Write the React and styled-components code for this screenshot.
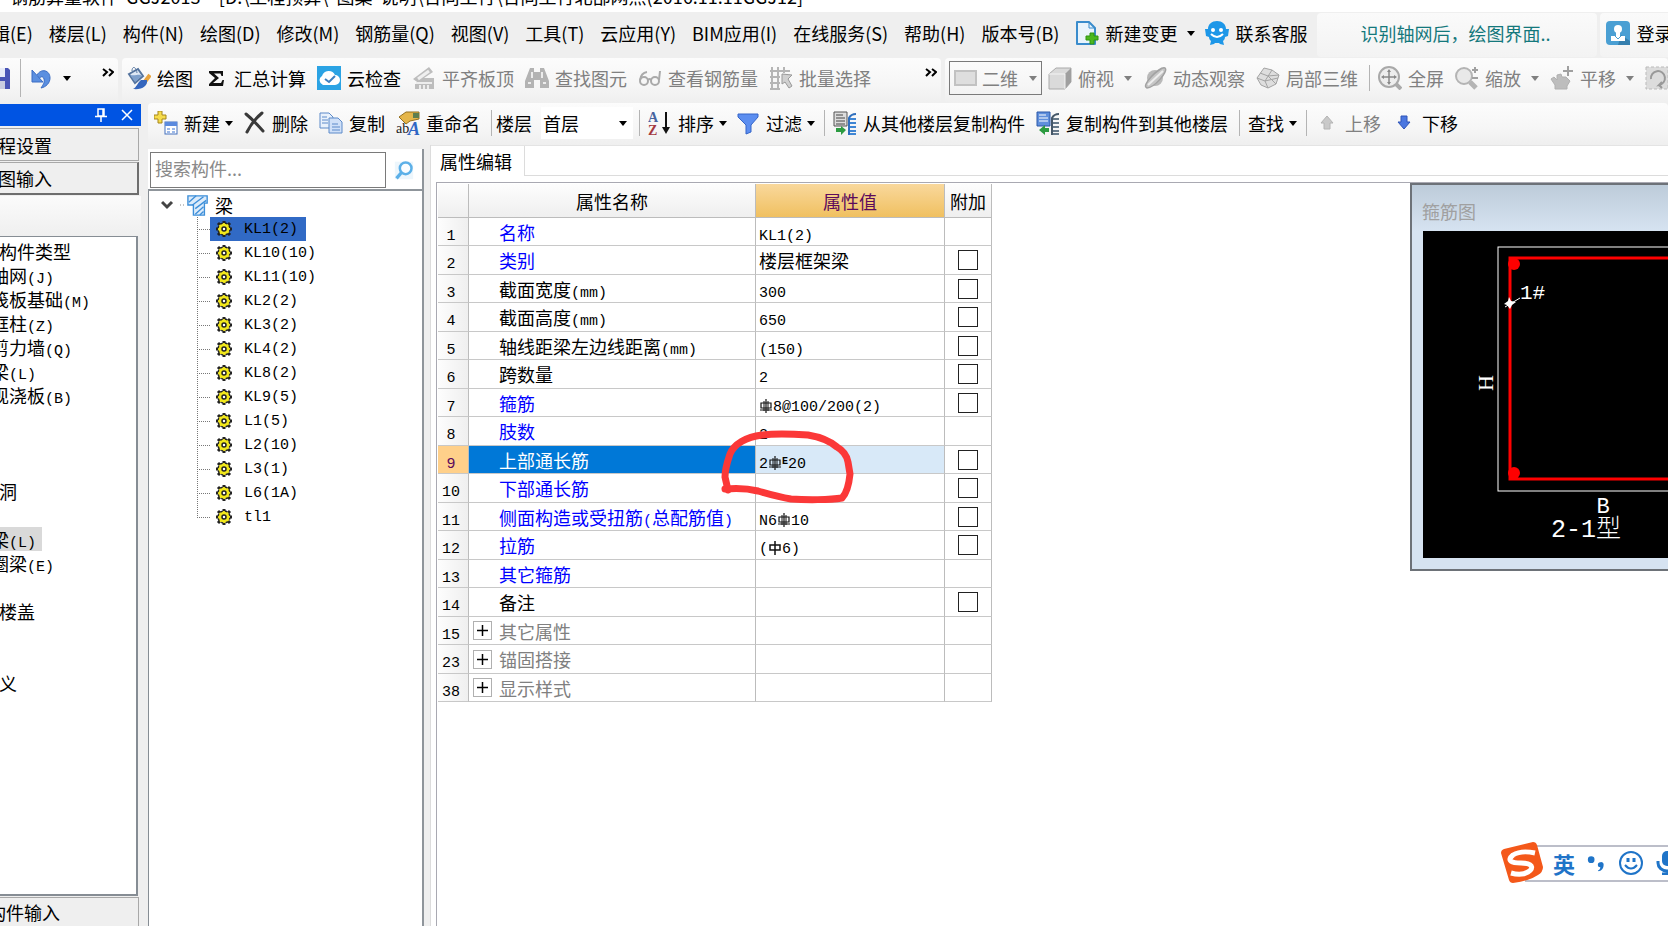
import React from 'react'
import styled, { createGlobalStyle } from 'styled-components';

const uiFont = '"Noto Sans CJK SC", "Noto Sans", sans-serif';

const GlobalStyle = createGlobalStyle`
    * { box-sizing: border-box; }
    body {
        margin: 0;
        overflow: hidden;
        background-color: #efefef;
        font-family: ${uiFont};
        font-size: 18px;
        color: #000;
    }
    button, input, select {
        font: inherit;
        color: inherit;
    }
    ul { list-style: none; margin: 0; padding: 0; }
`;

/* window frame */

const Window = styled.div`
    margin-left: -16px;
    height: 100vh;
    display: flex;
    flex-direction: column;
    overflow: hidden;
`;
const TitleBar = styled.header`
    height: 12px;
    flex: none;
    display: flex;
    align-items: flex-end;
    overflow: hidden;
    background-color: #fff;
    padding: 0 0 6px 26px;
    line-height: 20px;
    white-space: pre;
`;
const MenuBar = styled.nav`
    height: 46px;
    flex: none;
    display: flex;
    align-items: center;
    padding-left: 8px;
    line-height: 24px;
    white-space: nowrap;
`;
const MenuItem = styled.button`
    flex: none;
    margin: 0 16px 0 0;
    padding: 0 0 4px;
    border: 0;
    background: none;
`;
const MenuTool = styled.button`
    flex: none;
    display: flex;
    align-items: center;
    gap: 6px;
    margin-right: 10px;
    padding: 0 0 4px;
    border: 0;
    background: none;
    white-space: nowrap;
`;
const Notice = styled.a`
    flex: none;
    width: 280px;
    height: 44px;
    margin-right: 3px;
    padding-left: 43px;
    line-height: 40px;
    border-radius: 4px;
    background: linear-gradient(#fafafa, #f3f3f3);
    color: #14787c;
    text-decoration: none;
`;
const LoginBox = styled.div`
    flex: 1;
    height: 44px;
    display: flex;
    align-items: center;
    padding-left: 6px;
    border-radius: 4px;
    background: linear-gradient(#fafafa, #f3f3f3);
`;

/* toolbars */

const ToolRow = styled.div`
    flex: none;
    display: flex;
    gap: 4px;
    height: 45px;
`;
const ToolGroup = styled.div`
    flex: ${props => (props.$grow ? '1' : 'none')};
    width: ${props => (props.$width ? props.$width + 'px' : 'auto')};
    height: ${props => (props.$short ? '42px' : '45px')};
    display: flex;
    align-items: center;
    padding-left: ${props => props.$pad || 5}px;
    padding-bottom: ${props => (props.$short ? '2px' : '5px')};
    overflow: hidden;
    white-space: nowrap;
    border-radius: 4px;
    background: linear-gradient(#fcfcfc, #f6f6f6 60%, #efefef);
`;
const ToolButton = styled.button`
    flex: none;
    display: flex;
    align-items: center;
    gap: 6px;
    margin: 0;
    margin-right: ${props => (props.$tight ? '9px' : '11px')};
    padding: 0;
    border: 0;
    background: none;
    line-height: 28px;
    color: ${props => (props.disabled ? '#808080' : '#000')};
`;
const Caret = styled.span`
    width: 0;
    height: 0;
    margin-left: ${props => (props.$wide ? '4px' : '-1px')};
    border: 4px solid transparent;
    border-top: 5px solid currentColor;
    border-bottom: 0;
`;
const Separator = styled.span`
    flex: none;
    width: 1px;
    height: ${props => (props.$tall ? '38px' : '26px')};
    margin-right: ${props => (props.$tight ? '4px' : '8px')};
    background-color: #b4b4b4;
`;
const More = styled.button`
    margin: 0 4px 12px auto;
    padding: 0;
    border: 0;
    background: none;
    display: flex;
`;
const ViewCombo = styled.label`
    flex: none;
    display: flex;
    align-items: center;
    width: 93px;
    height: 34px;
    margin-right: 6px;
    padding: 0 4px;
    gap: 4px;
    border: 1px solid #7a7a7a;
    color: #808080;
`;
const ViewSelect = styled.select`
    appearance: none;
    flex: 1;
    min-width: 0;
    padding: 0;
    border: 0;
    background: none;
    opacity: 1;
    color: #808080;
`;
const FloorLabel = styled.label`
    flex: none;
    display: flex;
    align-items: center;
    gap: 9px;
    margin-right: 6px;
`;
const FloorField = styled.span`
    display: flex;
    align-items: center;
    width: 92px;
    height: 32px;
    padding: 0 6px 0 2px;
    background-color: #fff;
`;
const FloorSelect = styled.select`
    appearance: none;
    flex: 1;
    min-width: 0;
    padding: 0;
    border: 0;
    background: none;
`;

/* body */

const Body = styled.div`
    flex: 1;
    min-height: 0;
    display: flex;
`;
const Dock = styled.aside`
    flex: none;
    width: 157px;
    margin-right: 7px;
    padding-top: 1px;
    display: flex;
    flex-direction: column;
    white-space: nowrap;
`;
const DockTitle = styled.div`
    height: 22px;
    display: flex;
    align-items: center;
    justify-content: flex-end;
    gap: 14px;
    padding-right: 8px;
    margin-bottom: 2px;
    background-color: #0054e3;
`;
const DockIcon = styled.button`
    display: flex;
    padding: 0;
    border: 0;
    background: none;
`;
const DockButton = styled.button`
    height: ${props => (props.$last ? '29px' : '33px')};
    margin: 0 2px ${props => (props.$last ? '0' : '1px')} 0;
    padding: 0 0 0 ${props => props.$indent}px;
    text-align: left;
    line-height: 28px;
    background-color: #efefef;
    border: 1px solid #a8a8a8;
    border-width: ${props => (props.$raised ? '1px 2px 2px 0' : '1px 1px 1px 0')};
    border-bottom-color: ${props => (props.$raised ? '#6e6e6e' : '#a8a8a8')};
    border-right-color: ${props => (props.$raised ? '#6e6e6e' : '#a8a8a8')};
    ${props => props.$last && 'border-bottom: 0;'}
`;
const DockStrip = styled.div`
    height: 40px;
    background: linear-gradient(#fbfbfb, #efefef);
`;
const TypeList = styled.ul`
    flex: 1;
    min-height: 0;
    margin: 0 3px 1px 0;
    padding-top: 2px !important;
    border: 1px solid #868d94;
    border-width: 1px 2px 2px 0;
    background-color: #fff;
`;
const TypeItem = styled.li`
    height: 24px;
    line-height: 24px;
    padding-left: ${props => (props.$group ? '15px' : '7px')};
`;
const TypeName = styled.span`
    display: inline-block;
    height: 24px;
    padding-right: 6px;
    background-color: ${props => (props.$selected ? '#d9d9d9' : 'transparent')};
`;

const Main = styled.main`
    flex: 1;
    min-width: 0;
    display: flex;
    flex-direction: column;
`;
const Panels = styled.div`
    flex: 1;
    min-height: 0;
    display: flex;
    gap: 6px;
`;
const TreePanel = styled.section`
    flex: none;
    width: 276px;
    margin-top: 4px;
    display: flex;
    flex-direction: column;
    border-right: 2px solid #8f959b;
`;
const SearchRow = styled.form`
    display: flex;
    align-items: center;
    height: 42px;
    padding: 2px 0 0 2px;
    background-color: #fff;
    border-bottom: 2px solid #8f959b;
`;
const SearchInput = styled.input`
    width: 236px;
    height: 36px;
    padding: 0 4px 4px;
    border: 1px solid #7a7a7a;
    outline: 0;
    background-color: #fff;
    &::placeholder { color: #8a8a8a; }
`;
const SearchButton = styled.button`
    flex: 1;
    display: flex;
    justify-content: center;
    padding: 0;
    border: 0;
    background: none;
`;
const Tree = styled.div`
    flex: 1;
    padding: 2px 0 0 12px;
    border-left: 1px solid #868d94;
    background-color: #fff;
`;
const TreeRoot = styled.div`
    display: flex;
    align-items: center;
    height: 24px;
`;
const RootName = styled.span`
    margin-left: 6px;
`;
const TreeItems = styled.ul`
    margin-left: 36px !important;
`;
const TreeItem = styled.li`
    display: flex;
    align-items: center;
    height: 24px;
    background-image:
        linear-gradient(to right, #777 1px, transparent 1px),
        linear-gradient(to bottom, #777 1px, transparent 1px);
    background-repeat: repeat-x, repeat-y;
    background-position: 0 12px, 0 0;
    background-size: 2px 1px, 1px 2px;
    &:last-child {
        background-image:
            linear-gradient(to right, #777 1px, transparent 1px),
            repeating-linear-gradient(to bottom, #777 0 1px, transparent 1px 2px);
        background-repeat: repeat-x, no-repeat;
        background-size: 2px 1px, 1px 13px;
    }
`;
const TreeLeaf = styled.button`
    display: flex;
    align-items: center;
    gap: 12px;
    flex: none;
    height: 24px;
    margin: 0 0 0 13px;
    padding: 0 8px 0 6px;
    border: 0;
    background-color: ${props => (props.$selected ? '#316ac5' : '#fff')};
`;
const LeafTail = styled.span`
    align-self: stretch;
    flex: 1;
    background-color: #fff;
`;

const Editor = styled.section`
    flex: 1;
    min-width: 0;
    display: flex;
    flex-direction: column;
    border-left: 1px solid #dcdcdc;
    background-color: #fff;
`;
const Tabs = styled.div`
    flex: none;
    display: flex;
    height: 31px;
    border-top: 1px solid #e4e4e4;
`;
const Tab = styled.button`
    padding: 0 12px 0 9px;
    border: 0;
    border-right: 1px solid #dcdcdc;
    background: none;
    line-height: 28px;
`;
const TabRest = styled.div`
    flex: 1;
    border-bottom: 1px solid #dcdcdc;
`;
const Sheet = styled.div`
    flex: 1;
    display: flex;
    align-items: flex-start;
    justify-content: space-between;
    margin: 6px 0 0 5px;
    border-top: 1px solid #a9a9b2;
    border-left: 1px solid #a9a9b2;
`;
const GridWrap = styled.div`
    position: relative;
    padding: 1px 0 0 1px;
`;
const Grid = styled.table`
    border-collapse: separate;
    border-spacing: 0;
    table-layout: fixed;
    width: 554px;
    line-height: 24px;
`;
const HeadCell = styled.th`
    width: ${props => props.$width}px;
    height: 34px;
    padding: 0;
    font-weight: 400;
    white-space: nowrap;
    border-right: 1px solid #bcbcbc;
    border-bottom: 1px solid #bcbcbc;
    color: ${props => (props.$active ? '#5c0a5c' : '#000')};
    background: ${props => (props.$active ? 'linear-gradient(#f9d89c, #f0c060)' : 'linear-gradient(#fdfdfd, #efefef)')};
`;
const Row = styled.tr`
    height: 28px;
    &:nth-child(even) { height: 29px; }
`;
const NumCell = styled.th`
    padding: 0 4px 0 0;
    font-weight: 400;
    color: ${props => (props.$selected ? '#5c0a5c' : '#000')};
    background: ${props => (props.$selected ? '#ffd08a' : 'linear-gradient(to right, #fdfdfd, #efefef)')};
    border-right: 1px solid #bcbcbc;
    border-bottom: 1px solid #c8c8c8;
`;
const nameColors = { key: '#0000ff', plain: '#000', group: '#808080' };
const NameCell = styled.td`
    padding: 0;
    color: ${props => (props.$selected ? '#fff' : nameColors[props.$kind])};
    background-color: ${props => (props.$selected ? '#0078d7' : '#fff')};
    border-right: 1px solid #bcbcbc;
    border-bottom: 1px solid #c8c8c8;
`;
const NameBox = styled.div`
    display: flex;
    align-items: center;
    padding-left: ${props => (props.$group ? '4px' : '30px')};
    gap: 7px;
    height: 24px;
`;
const Expand = styled.button`
    width: 19px;
    height: 19px;
    display: flex;
    align-items: center;
    justify-content: center;
    padding: 0;
    border: 1px solid #b0b0b0;
    background-color: #fff;
`;
const ValueCell = styled.td`
    padding: 0 0 0 3px;
    background-color: ${props => (props.$selected ? '#d8e9f8' : '#fff')};
    border-right: 1px solid #bcbcbc;
    border-bottom: 1px solid #c8c8c8;
`;
const ValueBox = styled.div`
    height: 24px;
    white-space: pre;
    svg { vertical-align: -3px; }
`;
const CheckCell = styled.td`
    padding: 0;
    border-right: 1px solid #bcbcbc;
    border-bottom: 1px solid #c8c8c8;
`;
const Check = styled.input`
    appearance: none;
    display: block;
    width: 20px;
    height: 20px;
    margin: 0 auto;
    border: 1px solid #222;
    background-color: #fff;
`;
const Latin = styled.span`
    font-family: "Liberation Mono", monospace;
    font-size: 15px;
    line-height: 15px;
`;
const Sup = styled.sup`
    font-family: "Liberation Mono", monospace;
    font-size: 10px;
    font-weight: 700;
    line-height: 10px;
    vertical-align: 4px;
`;
const Mark = styled.svg`
    position: absolute;
    left: 279px;
    top: 241px;
    pointer-events: none;
`;

const Dialog = styled.section`
    flex: none;
    width: 258px;
    border: 2px solid #6d7278;
    border-width: 2px 0 2px 2px;
    padding: 0 0 11px 11px;
    background-color: #d6e3f1;
`;
const DialogTitle = styled.h2`
    margin: 0 0 0 -11px;
    height: 46px;
    padding: 10px 0 0 10px;
    font-size: 18px;
    font-weight: 400;
    line-height: 32px;
    color: #a0a0a0;
    background: linear-gradient(#bdccda, #d6e3f1);
`;
const Canvas = styled.svg`
    display: block;
    width: 100%;
    height: 327px;
    background-color: #000;
`;

const ImeBar = styled.div`
    position: fixed;
    right: 0;
    bottom: 44px;
    width: 167px;
    height: 38px;
    display: flex;
    align-items: center;
    gap: 10px;
`;
const SogouLogo = styled.svg`
    position: relative;
    z-index: 1;
    flex: none;
`;
const ImeKeys = styled.div`
    flex: 1;
    display: flex;
    align-items: center;
    gap: 12px;
    height: 37px;
    margin-left: -28px;
    padding-left: 28px;
    border-top: 2px solid #bcbec9;
    border-bottom: 2px solid #bcbec9;
    background-color: #fff;
    overflow: hidden;
`;
const ImeKey = styled.button`
    flex: none;
    display: flex;
    padding: 0;
    border: 0;
    background: none;
    color: #1f74c8;
    font-size: 22px;
    font-weight: 700;
    line-height: 30px;
`;

/* icons, all on a 24px box */

const shapes = {
    save: <><path d="M1 2h20l2 2v19H1z" fill="#4a55b5" /><path d="M6 2h12v9H6z" fill="#e8ebf8" /><path d="M6 15h12v8H6z" fill="#c9cce0" /><path d="M8 16h4v6H8z" fill="#3a3f90" /></>,
    undo: <><path d="M8 9C12 2 21 4 21 12c0 5-4 9-9 10 2-3 4-6 3-9-1-3-3-3-5 0" fill="#5b8fe0" stroke="#3a6cc4" /><path d="M3 4v12h11z" fill="#5b8fe0" stroke="#3a6cc4" /></>,
    paint: <><path d="M2 8l9-5 5 7-8 7z" fill="#dfe8f5" stroke="#55749e" strokeWidth="2" /><path d="M5 5c0-5 4-5 5 2" fill="none" stroke="#55749e" /><path d="M3 9c7 1 9-2 12 1l-7 6z" fill="#7e9fcb" /><path d="M23 9l-6 8" stroke="#e8a33c" strokeWidth="4" /><path d="M20 14c1 6-5 10-14 9 4-2 4-6 8-9z" fill="#3566bd" /></>,
    sigma: <path d="M5 5h14v5h-1.500l-1-2.500H10l5 4.500-6 5h8l1.500-3H20l-1 6H5v-2l6-6-6-5z" fill="#111" />,
    cloud: <><rect width="24" height="24" fill="#2ba3e4" /><path d="M6 19a5 5 0 0 1-1-9 7 7 0 0 1 13-1 5 5 0 0 1 0 10z" fill="#fff" /><path d="M8 13l4 3 6-6" fill="none" stroke="#3b7fc0" strokeWidth="2" /></>,
    slab: <><path d="M1 13L17 1l4 5-9 6h10v11H3v-5h5z" fill="#bdbdbd" /><path d="M6 13L17 5" stroke="#efefef" strokeWidth="3" /><path d="M4 17h16M8 19v4m4-4v4m4-4v4" stroke="#ededed" strokeWidth="2" /></>,
    binoculars: <><path d="M5 2h4v4h6V2h4l5 13v7h-9v-8H9v8H0v-7z" fill="#b3b3b3" /><path d="M3 17h3m12 0h3M7 6v6m10-6v6" stroke="#ececec" strokeWidth="2" /></>,
    glasses: <g fill="none" stroke="#aaa" strokeWidth="2"><circle cx="6" cy="15" r="4" /><circle cx="17" cy="15" r="4" /><path d="M10 14q2-2 3 0M2 14Q3 7 9 6m12 8l1-9" /></g>,
    grid: <><path d="M1 5h20M1 11h10M1 17h10M1 23h10M3 1v22M9 1v22M15 1v6" stroke="#b5b5b5" strokeWidth="2" /><path d="M13 8l10 1-4 4 4 7-3 2-4-6-3 2z" fill="#d0d0d0" stroke="#999" /></>,
    cube: <><path d="M1 8l7-6h15v14l-6 7H1z" fill="#dadada" stroke="#aaa" /><path d="M17 8l6-6v14l-6 7z" fill="#9f9f9f" /><path d="M1 8h16v15" fill="none" stroke="#f4f4f4" /></>,
    orbit: <><circle cx="12" cy="12" r="8" fill="#b9b9b9" /><path d="M4 22c-7-2 13-22 18-20 4 3-11 20-18 20z" fill="#c6c6c6" stroke="#a2a2a2" strokeWidth="1.500" /><path d="M5 19L20 5" stroke="#ededed" strokeWidth="2" /></>,
    cubes: <g fill="#dedede" stroke="#a3a3a3"><path d="M8 2l8 2 7 5-3 9-8 4-7-3-4-7z" /><path d="M1 12l8 3 7-11M9 15l3 7M4 7l8 3 8 8M12 10l11-1M9 15l13-3" fill="none" /></g>,
    fit: <><circle cx="11" cy="11" r="10" fill="#ededed" stroke="#a9a9a9" strokeWidth="2" /><path d="M11 5v12M5 11h12" stroke="#888" strokeWidth="1.500" /><path d="M9 6l2-3 2 3zM9 16l2 3 2-3zM6 9l-3 2 3 2zM16 9l3 2-3 2z" fill="#888" /><path d="M18 18l5 5" stroke="#aaa" strokeWidth="4" /></>,
    zoomer: <><circle cx="9" cy="10" r="8" fill="#e9e9e9" stroke="#b4b4b4" strokeWidth="2" /><path d="M15 16l6 6" stroke="#b4b4b4" strokeWidth="5" /><path d="M17 4h6M20 1v6M17 12h6" stroke="#a0a0a0" strokeWidth="2" /></>,
    hand: <><path d="M1 13l3-2 3 3 0-5 4-1 1 3 4 0 4 4-3 5v3H5v-4z" fill="#bdbdbd" stroke="#b0b0b0" strokeLinejoin="round" /><path d="M18 0v10M13 5h10" stroke="#a0a0a0" strokeWidth="2" /></>,
    rotate: <><rect x="1" y="1" width="22" height="22" fill="#dcdcdc" stroke="#bbb" strokeDasharray="3 2" /><path d="M6 13A7 7 0 1 1 14 19l3-3m-3 3l3 3" fill="none" stroke="#999" strokeWidth="2" /></>,
    plane: <rect x="1" y="5" width="21" height="14" fill="#dedede" stroke="#c2c2c2" strokeWidth="2" />,
    create: <><path d="M4 0h4v4h4v4H8v4H4V8H0V4h4z" fill="#f6dc4b" stroke="#a6861c" /><rect x="11" y="11" width="12" height="12" fill="#fff" stroke="#4470bd" /><path d="M11 11h12v4H11z" fill="#5b8ade" /><path d="M13 18h3m2 0h3m-8 3h3m2 0h3" stroke="#9cb8e8" strokeWidth="2" /></>,
    remove: <path d="M4 3c6 5 10 9 17 17M20 2C14 7 9 13 5 21" fill="none" stroke="#3a3a3a" strokeWidth="3" strokeLinecap="round" />,
    copy: <g fill="#e8f1fc" stroke="#5c8ac9"><path d="M1 2h9l4 4v11H1z" /><path d="M10 7h9l4 4v11H10z" fill="#cfe0f8" /><path d="M3 6h5M3 9h6M3 12h6m4 1h6m-6 3h8m-8 3h8" /></g>,
    rename: <><path d="M3 6l7-5h13v7l-9 2-4 3-3-3z" fill="#e5b64a" stroke="#94701f" /><path d="M17 2h6v5h-6z" fill="#5f7f4f" /><text x="0" y="22" fontSize="14" fontFamily="Liberation Serif" fill="#222">ab</text><text x="12" y="24" fontSize="18" fontWeight="700" fontStyle="italic" fontFamily="Liberation Serif" fill="#2f66c4">A</text></>,
    sort: <><text x="0" y="11" fontSize="14" fontWeight="700" fontFamily="Liberation Serif" fill="#46639f">A</text><text x="0" y="24" fontSize="14" fontWeight="700" fontFamily="Liberation Serif" fill="#a4393f">Z</text><path d="M18 1v17" stroke="#111" strokeWidth="2" /><path d="M14 16h8l-4 7z" fill="#111" /></>,
    filter: <path d="M2 3h20v3l-7 8v7l-5 2v-9L2 6z" fill="#5c8ef0" stroke="#3565c8" />,
    fromFloor: <><path d="M1 1h13v14H1z" fill="#ddd" stroke="#555" /><path d="M3 4h7M3 7h9M3 10h9M3 13h9" stroke="#444" /><path d="M3 17h5v-2l5 4-5 5v-3H3z" fill="#2c9b41" /><path d="M16 24V7q2-4 7-4" fill="none" stroke="#2f6fbd" strokeWidth="2" /><path d="M17 8h6m-6 4h6m-6 4h6m-6 4h6m-6 3h6" stroke="#3f86d4" strokeWidth="2" /></>,
    toFloor: <><path d="M1 1h13v14H1z" fill="#5f8fdc" stroke="#2d59a8" /><path d="M3 4h7M3 7h9M3 10h9" stroke="#fff" /><path d="M13 17H9v-3l-6 5 6 5v-3h4z" fill="#2c9b41" /><path d="M16 24V7q2-4 7-4" fill="none" stroke="#455768" strokeWidth="2" /><path d="M17 8h6m-6 4h6m-6 4h6m-6 4h6m-6 3h6" stroke="#66798a" strokeWidth="2" /></>,
    up: <path d="M12 5l6 7h-3v6H9v-6H6z" fill="#c9c9c9" stroke="#b4b4b4" />,
    down: <path d="M12 18l6-7h-3V5H9v6H6z" fill="#4b77e0" stroke="#2f55b8" />,
    change: <><path d="M2 1h12l6 6v16H2z" fill="#e9f4fc" stroke="#3a8ccc" strokeWidth="2" strokeLinejoin="round" /><path d="M14 1v6h6" fill="none" stroke="#3a8ccc" /><path d="M14 12h4v3h4v4h-4v4h-4v-4h-4v-4h4z" fill="#4cb81f" stroke="#2f9412" transform="translate(1 0)" /></>,
    service: <><path d="M12 0c5 0 9 3 9 8l3 0-1 7-3 1c0 2-1 3-2 4l1 4-4-1-1-1h-4l-1 1-4 1 1-4c-1-1-2-2-2-4l-3-1L0 8h3c0-5 4-8 9-8z" fill="#1d97e8" /><circle cx="8" cy="9" r="2" fill="#fff" /><circle cx="16" cy="9" r="2" fill="#fff" /><path d="M6 13q6 6 12 0" fill="none" stroke="#fff" strokeWidth="2" /></>,
    login: <><rect width="24" height="24" rx="4" fill="#4a9fd3" /><path d="M15 14l9 6v4H12z" fill="#357fae" /><circle cx="12" cy="8" r="4" fill="#fff" /><path d="M10 10h4v5h5v5H5v-5h5z" fill="#fff" /><path d="M9 15l3 3 3-3" fill="none" stroke="#4a9fd3" /></>,
    search: <><rect x="1" y="2" width="22" height="21" fill="#edf6fc" /><circle cx="14" cy="10" r="7" fill="#fafdff" stroke="#5cb0e8" strokeWidth="3" /><path d="M9 15l-6 7" stroke="#5cb0e8" strokeWidth="4" /></>,
    beam: <><path d="M1 2h21v8h-3v13H7V12H1z" fill="#dcebfa" stroke="#3d8fd9" strokeWidth="1.500" /><path d="M2 9l8-7M6 12L18 3M9 16l12-9M9 22l9-8M14 23l4-4" stroke="#3d8fd9" strokeWidth="1.500" /></>,
    smile: <g fill="none" stroke="currentColor" strokeWidth="2"><circle cx="12" cy="12" r="11" /><path d="M9 7v4M15 7v4" strokeWidth="3" /><path d="M6 14q6 7 12 0" /></g>,
    mic: <><rect x="7" y="0" width="10" height="15" rx="5" fill="currentColor" /><path d="M3 10v2a9 8 0 0 0 18 0v-2M12 19v4M7 23h10" fill="none" stroke="currentColor" strokeWidth="3" /></>,
    punct: <><circle cx="5" cy="8" r="4" fill="currentColor" /><path d="M16 11a3 3 0 0 1 4 3c0 4-2 7-6 8l-1-1c2-1 3-2 3-4a3 3 0 0 1 0-6z" fill="currentColor" /></>,
};

function Icon({ name, size = 24 }) {
    return <svg width={size} height={size} viewBox="0 0 24 24" aria-hidden="true">{shapes[name]}</svg>
}

function Gear() {
    return (
        <svg width="16" height="16" viewBox="0 0 16 16" aria-hidden="true">
            <path d="M8 0v16M0 8h16M2 2l12 12M14 2L2 14" stroke="#222" strokeWidth="3" />
            <circle cx="8" cy="8" r="6" fill="#f2e81c" stroke="#222" strokeWidth="1.500" strokeDasharray="2.700 2" />
            <path d="M8 2v12M2 8h12M4 4l8 8M12 4l-8 8" stroke="#f2e81c" strokeWidth="1.500" />
            <circle cx="8" cy="8" r="2" fill="#fff" stroke="#222" strokeWidth="1.500" />
        </svg>
    )
}

// steel grade sign: one bar for plain steel, three for ribbed
function Rebar({ grade }) {
    return (
        <svg width="14" height="16" viewBox="0 0 14 16" aria-hidden="true">
            <g fill="none" stroke="#111">
                <path d="M2 5h10v5H2zM7 1v14" strokeWidth={grade === 1 ? '1.500' : '1.200'} />
                {grade > 1 && <path d="M5 3v10M9 3v10M1 12h12" />}
            </g>
        </svg>
    )
}

// full-width and half-width characters sit on a 2:1 grid
function Mixed({ children }) {
    return children.split(/([\x20-\x7e]+)/).map((part, i) => (
        i % 2 ? <Latin key={i}>{part}</Latin> : part
    ))
}

function Tool({ icon, label, caret, ...rest }) {
    return (
        <ToolButton type="button" $tight={caret === 'tight'} {...rest}>
            {icon && <Icon name={icon} />}
            {label}
            {caret && <Caret $wide={caret === 'wide'} />}
        </ToolButton>
    )
}

function MoreButton() {
    return (
        <More type="button" aria-label="更多">
            <svg width="12" height="9" viewBox="0 0 12 9"><path d="M1 1l4 3-4 4M7 1l4 3-4 4" fill="none" stroke="#000" strokeWidth="2" /></svg>
        </More>
    )
}

const menus = ['辑(E)', '楼层(L)', '构件(N)', '绘图(D)', '修改(M)', '钢筋量(Q)', '视图(V)', '工具(T)', '云应用(Y)', 'BIM应用(I)', '在线服务(S)', '帮助(H)', '版本号(B)'];

const types = [
    { name: '构件类型', group: true }, { name: '轴网(J)' }, { name: '筏板基础(M)' }, { name: '框柱(Z)' },
    { name: '剪力墙(Q)' }, { name: '梁(L)' }, { name: '现浇板(B)' }, {}, {}, {},
    { name: '洞', group: true }, {}, { name: '梁(L)', selected: true }, { name: '圈梁(E)' }, {},
    { name: '楼盖', group: true }, {}, {}, { name: '义', group: true },
];

const members = ['KL1(2)', 'KL10(10)', 'KL11(10)', 'KL2(2)', 'KL3(2)', 'KL4(2)', 'KL8(2)', 'KL9(5)', 'L1(5)', 'L2(10)', 'L3(1)', 'L6(1A)', 'tl1'];

const properties = [
    { no: 1, name: '名称', kind: 'key', value: 'KL1(2)' },
    { no: 2, name: '类别', kind: 'key', value: '楼层框架梁', check: true },
    { no: 3, name: '截面宽度(mm)', kind: 'plain', value: '300', check: true },
    { no: 4, name: '截面高度(mm)', kind: 'plain', value: '650', check: true },
    { no: 5, name: '轴线距梁左边线距离(mm)', kind: 'plain', value: '(150)', check: true },
    { no: 6, name: '跨数量', kind: 'plain', value: '2', check: true },
    { no: 7, name: '箍筋', kind: 'key', grade: 3, after: '8@100/200(2)', check: true },
    { no: 8, name: '肢数', kind: 'key', value: '2' },
    { no: 9, name: '上部通长筋', kind: 'key', value: '2', grade: 3, sup: 'E', after: '20', check: true, selected: true },
    { no: 10, name: '下部通长筋', kind: 'key', check: true },
    { no: 11, name: '侧面构造或受扭筋(总配筋值)', kind: 'key', value: 'N6', grade: 3, after: '10', check: true },
    { no: 12, name: '拉筋', kind: 'key', value: '(', grade: 1, after: '6)', check: true },
    { no: 13, name: '其它箍筋', kind: 'key' },
    { no: 14, name: '备注', kind: 'plain', check: true },
    { no: 15, name: '其它属性', kind: 'group' },
    { no: 23, name: '锚固搭接', kind: 'group' },
    { no: 38, name: '显示样式', kind: 'group' },
];

function PropertyRow({ item }) {
    const group = item.kind === 'group'
    return (
        <Row>
            <NumCell scope="row" $selected={item.selected}><Latin>{item.no}</Latin></NumCell>
            <NameCell $kind={item.kind} $selected={item.selected}>
                <NameBox $group={group}>
                    {group && (
                        <Expand type="button" aria-label={'展开' + item.name}>
                            <svg width="11" height="11" viewBox="0 0 11 11"><path d="M0 5.500h11M5.500 0v11" stroke="#000" strokeWidth="1.500" /></svg>
                        </Expand>
                    )}
                    <span><Mixed>{item.name}</Mixed></span>
                </NameBox>
            </NameCell>
            <ValueCell $selected={item.selected}>
                <ValueBox>
                    {item.value && <Mixed>{item.value}</Mixed>}
                    {item.grade && <Rebar grade={item.grade} />}
                    {item.sup && <Sup>{item.sup}</Sup>}
                    {item.after && <Latin>{item.after}</Latin>}
                </ValueBox>
            </ValueCell>
            <CheckCell>
                {item.check && <Check type="checkbox" aria-label={item.name} />}
            </CheckCell>
        </Row>
    )
}

function StirrupDialog() {
    return (
        <Dialog>
            <DialogTitle>箍筋图</DialogTitle>
            <Canvas>
                <rect x="75" y="16" width="400" height="244" fill="none" stroke="#fff" />
                <rect x="87" y="27" width="400" height="221" fill="none" stroke="#f00" strokeWidth="3" />
                <circle cx="91" cy="33" r="6" fill="#f00" />
                <circle cx="91" cy="242" r="6" fill="#f00" />
                <path d="M82 76L97 67" stroke="#fff" />
                <path d="M86 66l2 4 5 1-4 3-2 4-3-4-3-1 4-3z" fill="#fff" />
                <g fill="#fff" fontFamily="Liberation Mono">
                    <text x="97" y="68" fontSize="21">1#</text>
                    <text x="0" y="0" fontSize="22" fontFamily="Liberation Serif" textAnchor="middle" transform="translate(70 152) rotate(-90)">H</text>
                    <text x="180" y="282" fontSize="22" textAnchor="middle">B</text>
                    <text x="128" y="306" fontSize="25" fontFamily="Liberation Mono, Noto Sans CJK SC">2-1<tspan fontWeight="300">型</tspan></text>
                </g>
            </Canvas>
        </Dialog>
    )
}

export default function App() {
    return (
        <>
            <GlobalStyle />
            <Window>
                <TitleBar>{'钢筋算量软件  GGJ2013  - [D:\\工程预算\\  图集  说明\\合同工行\\合同工行北部网点(2016.11.11GGJ12]'}</TitleBar>
                <MenuBar>
                    {menus.map(name => <MenuItem key={name} type="button">{name}</MenuItem>)}
                    <MenuTool type="button"><Icon name="change" />新建变更<Caret $wide /></MenuTool>
                    <MenuTool type="button"><Icon name="service" />联系客服</MenuTool>
                    <Notice href="#">识别轴网后，绘图界面..</Notice>
                    <LoginBox><MenuTool type="button"><Icon name="login" />登录</MenuTool></LoginBox>
                </MenuBar>

                <ToolRow>
                    <ToolGroup $width={134} $pad={3}>
                        <ToolButton type="button" aria-label="保存" $tight><Icon name="save" /></ToolButton>
                        <Separator $tall />
                        <ToolButton type="button" aria-label="撤销"><Icon name="undo" /><Caret $wide /></ToolButton>
                        <MoreButton />
                    </ToolGroup>
                    <ToolGroup $width={819}>
                        <Tool icon="paint" label="绘图" />
                        <Tool icon="sigma" label="汇总计算" />
                        <Tool icon="cloud" label="云检查" />
                        <Tool icon="slab" label="平齐板顶" disabled />
                        <Tool icon="binoculars" label="查找图元" disabled />
                        <Tool icon="glasses" label="查看钢筋量" disabled />
                        <Tool icon="grid" label="批量选择" disabled />
                        <MoreButton />
                    </ToolGroup>
                    <ToolGroup $grow $pad={4}>
                        <ViewCombo>
                            <Icon name="plane" />
                            <ViewSelect aria-label="视图方式" disabled><option>二维</option></ViewSelect>
                            <Caret />
                        </ViewCombo>
                        <Tool icon="cube" label="俯视" caret="wide" disabled />
                        <Tool icon="orbit" label="动态观察" disabled />
                        <Tool icon="cubes" label="局部三维" disabled />
                        <Separator />
                        <Tool icon="fit" label="全屏" disabled />
                        <Tool icon="zoomer" label="缩放" caret="wide" disabled />
                        <Tool icon="hand" label="平移" caret="wide" disabled />
                        <Tool icon="rotate" aria-label="旋转" disabled />
                    </ToolGroup>
                </ToolRow>

                <Body>
                    <Dock>
                        <DockTitle>
                            <DockIcon type="button" aria-label="固定">
                                <svg width="12" height="14" viewBox="0 0 12 14"><path d="M3 1h6v7H3zM0 8.500h12M6 8v6M8 1v7" fill="none" stroke="#fff" strokeWidth="1.500" /></svg>
                            </DockIcon>
                            <DockIcon type="button" aria-label="关闭">
                                <svg width="12" height="12" viewBox="0 0 12 12"><path d="M1 1l10 10M11 1L1 11" stroke="#fff" strokeWidth="1.500" /></svg>
                            </DockIcon>
                        </DockTitle>
                        <DockButton type="button" $indent={14}>程设置</DockButton>
                        <DockButton type="button" $indent={14} $raised>图输入</DockButton>
                        <DockStrip />
                        <TypeList>
                            {types.map((t, i) => (
                                <TypeItem key={i} $group={t.group}>
                                    {t.name && <TypeName $selected={t.selected}><Mixed>{t.name}</Mixed></TypeName>}
                                </TypeItem>
                            ))}
                        </TypeList>
                        <DockButton type="button" $indent={4} $last>构件输入</DockButton>
                    </Dock>

                    <Main>
                        <ToolGroup $short $pad={6}>
                            <Tool icon="create" label="新建" caret="tight" />
                            <Tool icon="remove" label="删除" />
                            <Tool icon="copy" label="复制" />
                            <Tool icon="rename" label="重命名" />
                            <Separator $tight />
                            <FloorLabel>
                                楼层
                                <FloorField>
                                    <FloorSelect><option>首层</option></FloorSelect>
                                    <Caret />
                                </FloorField>
                            </FloorLabel>
                            <Separator />
                            <Tool icon="sort" label="排序" caret="tight" />
                            <Tool icon="filter" label="过滤" caret="tight" />
                            <Separator />
                            <Tool icon="fromFloor" label="从其他楼层复制构件" />
                            <Tool icon="toFloor" label="复制构件到其他楼层" />
                            <Separator />
                            <Tool label="查找" caret="tight" />
                            <Separator />
                            <Tool icon="up" label="上移" disabled />
                            <Tool icon="down" label="下移" />
                        </ToolGroup>

                        <Panels>
                            <TreePanel>
                                <SearchRow>
                                    <SearchInput type="text" placeholder="搜索构件..." aria-label="搜索构件" />
                                    <SearchButton type="button" aria-label="搜索"><Icon name="search" size={20} /></SearchButton>
                                </SearchRow>
                                <Tree>
                                    <TreeRoot>
                                        <svg width="26" height="12" viewBox="0 0 26 12"><path d="M1 3l5 5 5-5" fill="none" stroke="#444" strokeWidth="3" /><path d="M19 6h6" stroke="#888" strokeDasharray="1 2" /></svg>
                                        <Icon name="beam" size={22} />
                                        <RootName>梁</RootName>
                                    </TreeRoot>
                                    <TreeItems>
                                        {members.map((name, i) => (
                                            <TreeItem key={name}>
                                                <TreeLeaf type="button" $selected={i === 0}><Gear /><Latin>{name}</Latin></TreeLeaf>
                                                <LeafTail />
                                            </TreeItem>
                                        ))}
                                    </TreeItems>
                                </Tree>
                            </TreePanel>

                            <Editor>
                                <Tabs>
                                    <Tab type="button">属性编辑</Tab>
                                    <TabRest />
                                </Tabs>
                                <Sheet>
                                    <GridWrap>
                                        <Grid>
                                            <thead>
                                                <tr>
                                                    <HeadCell $width={31} />
                                                    <HeadCell $width={287}>属性名称</HeadCell>
                                                    <HeadCell $width={189} $active>属性值</HeadCell>
                                                    <HeadCell $width={47}>附加</HeadCell>
                                                </tr>
                                            </thead>
                                            <tbody>
                                                {properties.map(item => <PropertyRow key={item.no} item={item} />)}
                                            </tbody>
                                        </Grid>
                                        <Mark width="150" height="90" viewBox="0 0 150 90" aria-hidden="true">
                                            <path
                                                d="M12 66L9 53C9 44 12 36 14 30C18 20 30 13 46 11C62 9 78 10 92 11C104 13 114 17 121 23C128 27 131 32 132 38L134 50C133 60 131 69 126 74C114 76 90 76 75 75C62 73 52 70 42 67C30 64 20 64 9 65"
                                                fill="none" stroke="#fb3838" strokeWidth="7" strokeLinejoin="round" strokeLinecap="round"
                                            />
                                        </Mark>
                                    </GridWrap>
                                    <StirrupDialog />
                                </Sheet>
                            </Editor>
                        </Panels>
                    </Main>
                </Body>
            </Window>

            <ImeBar>
                <SogouLogo width="42" height="42" viewBox="0 0 42 42" aria-hidden="true">
                    <path d="M3 7L32 0q3 0 4 3l6 22q0 5-5 8-9 6-25 8-3 0-4-3L0 11q0-3 3-4z" fill="#f4581a" />
                    <path d="M34 11Q20 8 12 13c-7 6-1 8 8 8 11 0 14 5 7 9-5 3-10 3-17 1" fill="none" stroke="#fff" strokeWidth="5" />
                </SogouLogo>
                <ImeKeys>
                    <ImeKey type="button">英</ImeKey>
                    <ImeKey type="button" aria-label="标点"><Icon name="punct" size={20} /></ImeKey>
                    <ImeKey type="button" aria-label="表情"><Icon name="smile" /></ImeKey>
                    <ImeKey type="button" aria-label="语音"><Icon name="mic" /></ImeKey>
                </ImeKeys>
            </ImeBar>
        </>
    )
}
